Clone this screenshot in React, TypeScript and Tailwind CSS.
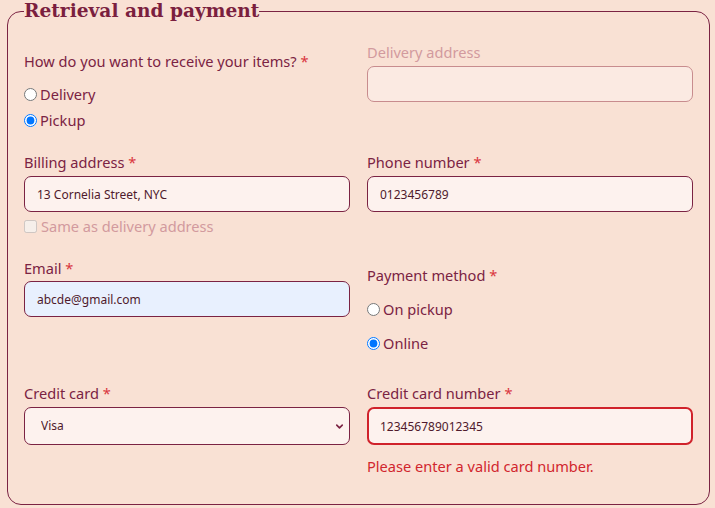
import { ChevronDown } from "lucide-react";

const label = "block text-[14.6px] leading-[20px] text-[#7b2343]";
const field =
  "block h-[36px] w-full rounded-[7px] border border-[#7b2343] px-[12px] text-[12px] text-[#4f1a2c] outline-none";

function Req() {
  return <span className="text-[#d9363e]"> *</span>;
}

function Radio({ name, text, checked }: { name: string; text: string; checked?: boolean }) {
  return (
    <label className="flex items-center text-[14.6px] leading-[20px] text-[#7b2343]">
      <input type="radio" name={name} defaultChecked={checked} className="m-0 mr-[3px] h-[13px] w-[13px]" />
      {text}
    </label>
  );
}

export default function App() {
  return (
    <div className="min-h-[508px] bg-[#f9e1d4] pl-[7px] font-['Noto_Sans',sans-serif]">
      <fieldset className="w-[703px] rounded-[14px] border border-[#7b2343] px-[16px] pt-[20px] pb-[28px]">
        <legend className="font-['DejaVu_Serif',serif] text-[18.6px] leading-[22px] font-bold text-[#7b1f3f]">
          Retrieval and payment
        </legend>

        <div className="grid h-[110px] grid-cols-2 gap-x-[17px]">
          <div className="pt-[9px]">
            <span className={label}>
              How do you want to receive your items?<Req />
            </span>
            <div className="mt-[13px] flex flex-col gap-[6px]">
              <Radio name="receive" text="Delivery" />
              <Radio name="receive" text="Pickup" checked />
            </div>
          </div>
          <div>
            <span className="block text-[14.6px] leading-[20px] text-[#d29a9e]">Delivery address</span>
            <input
              disabled
              className="mt-[4px] block h-[36px] w-full rounded-[7px] border border-[#c88c8e] bg-[#fbeae2] px-[12px] outline-none"
            />
          </div>
        </div>

        <div className="grid h-[106px] grid-cols-2 gap-x-[17px]">
          <div>
            <span className={label}>
              Billing address<Req />
            </span>
            <input className={`mt-[4px] bg-[#fdf2ee] ${field}`} defaultValue="13 Cornelia Street, NYC" />
            <label className="mt-[4px] flex items-center text-[14.6px] leading-[20px] text-[#d29a9e]">
              <input type="checkbox" disabled className="m-0 mr-[4px] h-[13px] w-[13px]" />
              Same as delivery address
            </label>
          </div>
          <div>
            <span className={label}>
              Phone number<Req />
            </span>
            <input className={`mt-[4px] bg-[#fdf2ee] ${field}`} defaultValue="0123456789" />
          </div>
        </div>

        <div className="grid h-[125px] grid-cols-2 gap-x-[17px]">
          <div>
            <span className={label}>
              Email<Req />
            </span>
            <input className={`mt-[3px] bg-[#e8f0fe] ${field}`} defaultValue="abcde@gmail.com" />
          </div>
          <div className="pt-[7px]">
            <span className={label}>
              Payment method<Req />
            </span>
            <div className="mt-[14px] flex flex-col gap-[14px]">
              <Radio name="pay" text="On pickup" />
              <Radio name="pay" text="Online" checked />
            </div>
          </div>
        </div>

        <div className="grid grid-cols-2 gap-x-[17px]">
          <div>
            <span className={label}>
              Credit card<Req />
            </span>
            <div className="relative mt-[4px]">
              <select className="block h-[38px] w-full appearance-none rounded-[7px] border border-[#7b2343] bg-[#fdf2ee] pl-[16px] text-[12px] text-[#4f1a2c] outline-none">
                <option>Visa</option>
                <option>Mastercard</option>
              </select>
              <ChevronDown
                strokeWidth={3.5}
                className="pointer-events-none absolute right-[5px] top-[14px] h-[11px] w-[11px] text-[#7b2343]"
              />
            </div>
          </div>
          <div>
            <span className={label}>
              Credit card number<Req />
            </span>
            <input
              className="mt-[4px] block h-[38px] w-full rounded-[7px] border-2 border-[#d0222b] bg-[#fdf2ee] px-[11px] text-[12px] text-[#4f1a2c] outline-none"
              defaultValue="123456789012345"
            />
            <p className="mt-[11px] text-[14.6px] leading-[20px] text-[#d1262e]">Please enter a valid card number.</p>
          </div>
        </div>
      </fieldset>
    </div>
  );
}
